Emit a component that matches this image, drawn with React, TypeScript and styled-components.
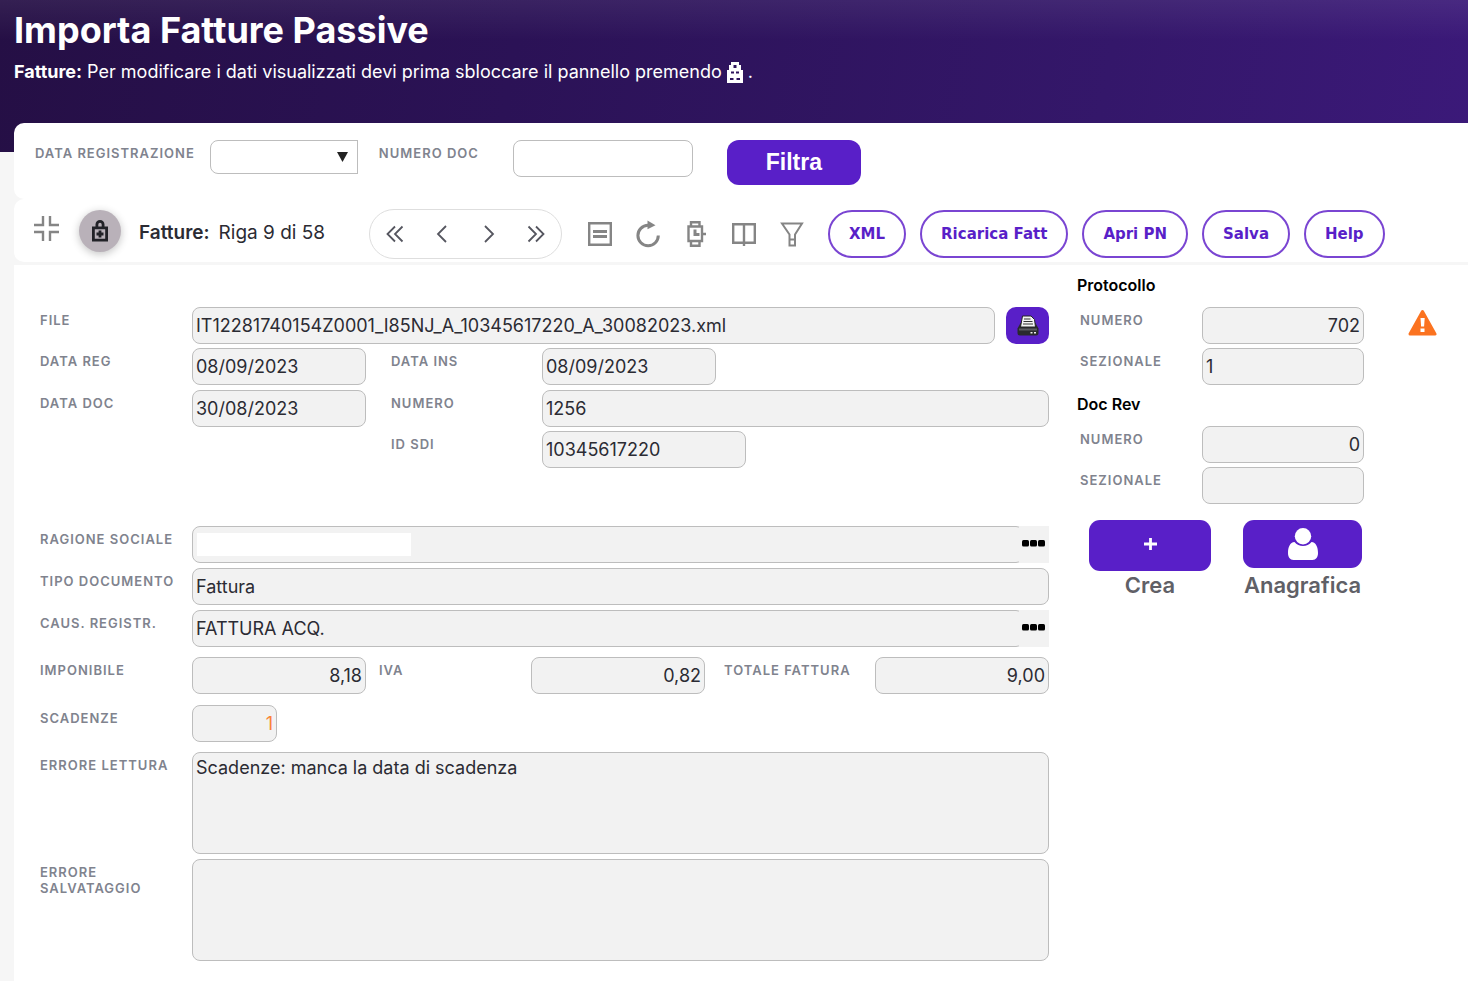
import React, { useId } from 'react';
import styled, { createGlobalStyle } from 'styled-components';

const violet = '#591fc8';

const GlobalStyle = createGlobalStyle`
  *, *::before, *::after { box-sizing: border-box; }
  body {
    margin: 0;
    background: #f6f6f6;
    color: #2b2b33;
    font-family: Inter, "Liberation Sans", sans-serif;
    font-size: 18px;
  }
  button, input, select, textarea { font: inherit; color: inherit; margin: 0; }
  button { cursor: pointer; }
`;

const Page = styled.div`
  display: flex;
  flex-direction: column;
  min-height: 100vh;
`;

const Header = styled.header`
  height: 152px;
  padding: 8px 14px 0;
  color: #fff;
  background:
    linear-gradient(180deg, rgba(255, 255, 255, 0.07), rgba(255, 255, 255, 0) 40px),
    linear-gradient(100deg, #250f45 0%, #2b1256 35%, #34176a 75%, #3b1979 100%);
`;

const Title = styled.h1`
  margin: 0;
  font-size: 36px;
  line-height: 44px;
  font-weight: 700;
`;

const Hint = styled.p`
  display: flex;
  align-items: center;
  gap: 5px;
  margin: 8px 0 0;
  line-height: 24px;
`;

const Main = styled.main`
  flex: 1;
  display: flex;
  flex-direction: column;
  margin: -29px 0 0 14px;
`;

const FilterBar = styled.form`
  display: flex;
  align-items: flex-start;
  height: 76px;
  padding: 17px 20px 0 21px;
  border-radius: 10px 0 0 10px;
  background: #fff;
`;

const Toolbar = styled.section`
  display: flex;
  align-items: center;
  height: 63px;
  padding: 7px 20px 0;
  border-radius: 10px 0 0 10px;
  background: #fff;
`;

const Content = styled.div`
  flex: 1;
  display: grid;
  grid-template-columns: minmax(0, 1fr) 391px;
  column-gap: 28px;
  margin-top: 3px;
  padding: 0 0 20px 26px;
  background: #fff;
`;

const Label = styled.label<{ $width?: number }>`
  flex: none;
  width: ${(p) => (p.$width ? p.$width + 'px' : 'auto')};
  padding-top: 5px;
  font-size: 13px;
  line-height: 16px;
  font-weight: 600;
  letter-spacing: 1px;
  text-transform: uppercase;
  color: #80838e;
`;

const Field = styled.input<{ $width?: number; $alert?: boolean }>`
  flex: ${(p) => (p.$width ? 'none' : '1')};
  width: ${(p) => (p.$width ? p.$width + 'px' : 'auto')};
  min-width: 0;
  height: 37px;
  padding: 0 3px;
  border: 1px solid #bdbdbd;
  border-radius: 8px;
  background: #f2f2f2;
  outline: 0;
  color: ${(p) => (p.$alert ? '#fb8437' : 'inherit')};
  text-align: ${(p) => (p.inputMode === 'decimal' ? 'right' : 'left')};
`;

const FilterField = styled(Field)`
  background: #fff;
`;

const Area = styled.textarea`
  flex: 1;
  height: 102px;
  padding: 3px;
  border: 1px solid #bdbdbd;
  border-radius: 8px;
  background: #f2f2f2;
  line-height: 24px;
  outline: 0;
  resize: none;
`;

const Picker = styled.div`
  position: relative;
  width: 148px;
  margin: 0 21px 0 15px;
`;

const PickerSelect = styled.select`
  display: block;
  width: 100%;
  height: 34px;
  padding: 0 30px 0 4px;
  border: 1px solid #bdbdbd;
  border-radius: 8px;
  background: #fff;
  appearance: none;
  outline: 0;
`;

const PickerArrow = styled.span`
  position: absolute;
  top: 0;
  right: 0;
  bottom: 0;
  display: flex;
  align-items: center;
  justify-content: center;
  width: 29px;
  border: 1px solid #bdbdbd;
  border-left: 0;
  background: #fff;
  pointer-events: none;
`;

const FilterButton = styled.button`
  width: 134px;
  height: 45px;
  margin-left: 34px;
  border: 0;
  border-radius: 12px;
  background: ${violet};
  color: #fff;
  font-family: "Liberation Sans", Arial, sans-serif;
  font-size: 23px;
  font-weight: 700;
`;

const BareButton = styled.button`
  display: flex;
  align-items: center;
  justify-content: center;
  padding: 0;
  border: 0;
  background: none;
`;

const CollapseButton = styled(BareButton)`
  margin-bottom: 12px;
`;

const LockButton = styled(BareButton)`
  width: 42px;
  height: 42px;
  margin: 0 18px 6px 20px;
  border-radius: 50%;
  background: #b9b1b9;
  box-shadow: 0 2px 8px rgba(0, 0, 0, 0.24);
`;

const RowStatus = styled.h2`
  width: 230px;
  margin: 0 0 2px;
  font-size: 19px;
  line-height: 24px;
  font-weight: 400;
  white-space: nowrap;
  b { font-weight: 600; margin-right: 9px; }
`;

const Pager = styled.nav`
  display: flex;
  align-items: center;
  justify-content: space-between;
  width: 193px;
  height: 50px;
  padding: 0 13px;
  border: 1px solid #dedede;
  border-radius: 25px;
`;

const Tools = styled.div`
  display: flex;
  gap: 20px;
  margin: 0 22px 0 24px;
`;

const Actions = styled.div`
  display: flex;
  gap: 14px;
`;

const ActionButton = styled.button`
  height: 48px;
  padding: 0 19px;
  border: 2px solid #7a45d2;
  border-radius: 24px;
  background: #fff;
  color: ${violet};
  font-family: "DejaVu Sans", Verdana, sans-serif;
  font-size: 15px;
  font-weight: 700;
  white-space: nowrap;
`;

const FormColumn = styled.form`
  padding-top: 42px;
`;

const Row = styled.div<{ $gap?: number }>`
  display: flex;
  align-items: flex-start;
  margin-bottom: ${(p) => p.$gap ?? 5}px;
`;

const PairCell = styled.div<{ $width?: number; $push?: number }>`
  display: flex;
  align-items: flex-start;
  flex: ${(p) => (p.$width ? 'none' : '1')};
  width: ${(p) => (p.$width ? p.$width + 'px' : 'auto')};
  margin-left: ${(p) => p.$push ?? 0}px;
`;

const PrintButton = styled(BareButton)`
  width: 43px;
  height: 37px;
  margin-left: 11px;
  border-radius: 10px;
  background: ${violet};
`;

const Lookup = styled.div`
  flex: 1;
  display: flex;
`;

const LookupButton = styled(BareButton)`
  position: relative;
  width: 30px;
  height: 37px;
  margin-left: -5px;
  padding: 0 2px 2px 0;
  background: #f2f2f2;
`;

const Redaction = styled.span`
  position: absolute;
  top: 7px;
  left: 5px;
  width: 214px;
  height: 23px;
  background: #fff;
`;

const FieldWrap = styled.div`
  position: relative;
  display: flex;
  flex: 1;
`;

const Side = styled.aside`
  padding-top: 10px;
`;

const SideTitle = styled.h3`
  margin: 0 0 12px;
  color: #000;
  font-size: 16px;
  line-height: 20px;
  font-weight: 600;
`;

const SideGroup = styled.section`
  margin-bottom: 9px;
`;

const SideRow = styled(Row)`
  padding-left: 3px;
`;

const SideActions = styled.div`
  display: flex;
  gap: 32px;
  margin: 16px 0 0 12px;
`;

const SideAction = styled.div<{ $width: number }>`
  display: flex;
  flex-direction: column;
  align-items: center;
  width: ${(p) => p.$width}px;
`;

const SideButton = styled(BareButton)<{ $height: number }>`
  width: 100%;
  height: ${(p) => p.$height}px;
  border-radius: 11px;
  background: ${violet};
  color: #fff;
`;

const Caption = styled.label<{ $space: number }>`
  margin-top: ${(p) => p.$space}px;
  color: #606066;
  font-size: 22px;
  line-height: 28px;
  font-weight: 600;
`;

const WarningIcon = styled.svg`
  margin: 2px 0 0 44px;
`;

const Svg = ({ children }: { children: React.ReactNode }) => (
  <svg width="28" height="28" viewBox="0 0 28 28" fill="none" stroke="#858585" strokeWidth="2.4" aria-hidden="true">
    {children}
  </svg>
);

const Chevron = ({ d }: { d: string }) => (
  <svg width="24" height="24" viewBox="0 0 24 24" fill="none" stroke="#55565f" strokeWidth="1.8" aria-hidden="true">
    <path d={d} />
  </svg>
);

const Dots = () => (
  <svg width="23" height="7" viewBox="0 0 23 7" aria-hidden="true">
    <rect x="0" width="7" height="6.500" rx="1.500" />
    <rect x="8" width="7" height="6.500" rx="1.500" />
    <rect x="16" width="7" height="6.500" rx="1.500" />
  </svg>
);

type EntryProps = {
  label: string;
  value?: string;
  labelWidth: number;
  width?: number;
  numeric?: boolean;
  alert?: boolean;
};

const Entry = ({ label, value = '', labelWidth, width, numeric, alert }: EntryProps) => {
  const id = useId();
  return (
    <>
      <Label htmlFor={id} $width={labelWidth}>{label}</Label>
      <Field id={id} readOnly value={value} $width={width} $alert={alert} inputMode={numeric ? 'decimal' : 'text'} />
    </>
  );
};

const LookupEntry = ({ label, value = '', masked }: { label: string; value?: string; masked?: boolean }) => {
  const id = useId();
  return (
    <>
      <Label htmlFor={id} $width={152}>{label}</Label>
      <Lookup>
        <FieldWrap>
          <Field id={id} readOnly value={value} />
          {masked && <Redaction />}
        </FieldWrap>
        <LookupButton type="button" aria-label={'Cerca ' + label}><Dots /></LookupButton>
      </Lookup>
    </>
  );
};

const AreaEntry = ({ label, value = '' }: { label: string; value?: string }) => {
  const id = useId();
  return (
    <>
      <Label htmlFor={id} $width={152}>{label}</Label>
      <Area id={id} readOnly value={value} />
    </>
  );
};

export default function App() {
  return (
    <Page>
      <GlobalStyle />
      <Header>
        <Title>Importa Fatture Passive</Title>
        <Hint>
          <b>Fatture:</b>
          <span>Per modificare i dati visualizzati devi prima sbloccare il pannello premendo</span>
          <svg width="16" height="21" viewBox="0 0 16 21" fill="#fff" fillRule="evenodd" aria-hidden="true">
            <path d="M4 0h8v3h2v5h2v13H0V8h2V3h2zM6.500 3v3h3V3zM4 9.500v2h3v-2zm5 0v2h3v-2zM3 16v2h3.500v-2zm6.500 0v2H13v-2z" />
          </svg>
          <span>.</span>
        </Hint>
      </Header>

      <Main>
        <FilterBar>
          <Label htmlFor="data-registrazione">Data registrazione</Label>
          <Picker>
            <PickerSelect id="data-registrazione"><option /></PickerSelect>
            <PickerArrow>
              <svg width="11" height="10" viewBox="0 0 11 10" aria-hidden="true"><path d="M0 0h11L5.500 10z" fill="#222" /></svg>
            </PickerArrow>
          </Picker>
          <Label htmlFor="numero-doc" $width={134}>Numero doc</Label>
          <FilterField id="numero-doc" $width={180} />
          <FilterButton type="button">Filtra</FilterButton>
        </FilterBar>

        <Toolbar>
          <CollapseButton aria-label="Riduci">
            <svg width="25" height="25" viewBox="0 0 25 25" fill="none" stroke="#858585" strokeWidth="2.400" aria-hidden="true">
              <path d="M9 0v9H0M16 0v9h9M9 25v-9H0M16 25v-9h9" />
            </svg>
          </CollapseButton>
          <LockButton aria-label="Sblocca">
            <svg width="16" height="22" viewBox="0 0 16 22" fill="none" stroke="#222228" strokeWidth="2.800" aria-hidden="true">
              <path d="M1.400 7.900h13.200v12.200H1.400zM4.900 8V4.500a3.100 3.100 0 0 1 6.200 0V8M8 10.500v7M4.500 14h7" />
            </svg>
          </LockButton>
          <RowStatus><b>Fatture:</b>Riga 9 di 58</RowStatus>
          <Pager aria-label="Righe">
            <BareButton aria-label="Prima"><Chevron d="M12 4.500L4.500 12l7.500 7.500M19.500 4.500L12 12l7.500 7.500" /></BareButton>
            <BareButton aria-label="Precedente"><Chevron d="M16 4L8 12l8 8" /></BareButton>
            <BareButton aria-label="Successiva"><Chevron d="M8 4l8 8-8 8" /></BareButton>
            <BareButton aria-label="Ultima"><Chevron d="M4.500 4.500L12 12l-7.500 7.500M12 4.500l7.500 7.500-7.500 7.500" /></BareButton>
          </Pager>
          <Tools>
            <BareButton aria-label="Elenco">
              <Svg><path d="M3.200 3.200h21.600v21.600H3.200z" /><path d="M7 11.500h14M7 16.500h14" strokeWidth="2.800" /></Svg>
            </BareButton>
            <BareButton aria-label="Aggiorna">
              <Svg><path d="M24.300 15.500A10.200 10.200 0 1 1 14 5.300h3" strokeWidth="3" /><path d="M13.500 0.500l8 4.800-8 4z" fill="#858585" stroke="none" /></Svg>
            </BareButton>
            <BareButton aria-label="Cronologia">
              <Svg><path d="M6.500 6.500h13.500v14.500H6.500zM9 6.500V2.200h8.500v4.300M9 21v4.800h8.500V21M20 14h4" /><path d="M13 9.500v5h4.500" strokeWidth="3" /></Svg>
            </BareButton>
            <BareButton aria-label="Libro">
              <Svg><path d="M3.200 4.200h21.600v18.600H3.200zM14 4v22" /></Svg>
            </BareButton>
            <BareButton aria-label="Filtro">
              <Svg><path d="M4 3.500h20l-7 11v11h-5.500v-11zM11.500 19.500H17" strokeWidth="2" /></Svg>
            </BareButton>
          </Tools>
          <Actions>
            <ActionButton>XML</ActionButton>
            <ActionButton>Ricarica Fatt</ActionButton>
            <ActionButton>Apri PN</ActionButton>
            <ActionButton>Salva</ActionButton>
            <ActionButton>Help</ActionButton>
          </Actions>
        </Toolbar>

        <Content>
          <FormColumn>
            <Row $gap={4}>
              <Entry label="File" labelWidth={152} value="IT12281740154Z0001_I85NJ_A_10345617220_A_30082023.xml" />
              <PrintButton type="button" aria-label="Stampa">
                <svg width="22" height="22" viewBox="0 0 22 22" aria-hidden="true">
                  <path d="M3.500 8h15l3 5.500V18a2.500 2.500 0 0 1-2.500 2.500H3A2.500 2.500 0 0 1 .5 18v-4.500z" fill="#2a2a2d" />
                  <path d="M5.500 1H14l3.500 3.500 1 7.500H3.500z" fill="#f4f4f4" stroke="#232326" />
                  <path d="M7 4h6.500M6.500 6.500h9M6 9h10" stroke="#333" />
                  <path d="M2 13.500h18v2H2z" fill="#5b5b60" />
                  <path d="M13.500 17h2v1.500h-2zM17 17h2v1.500h-2z" fill="#eee" />
                </svg>
              </PrintButton>
            </Row>
            <Row>
              <PairCell $width={326}><Entry label="Data reg" labelWidth={152} width={174} value="08/09/2023" /></PairCell>
              <PairCell $push={25}><Entry label="Data ins" labelWidth={151} width={174} value="08/09/2023" /></PairCell>
            </Row>
            <Row $gap={4}>
              <PairCell $width={326}><Entry label="Data doc" labelWidth={152} width={174} value="30/08/2023" /></PairCell>
              <PairCell $push={25}><Entry label="Numero" labelWidth={151} value="1256" /></PairCell>
            </Row>
            <Row $gap={58}>
              <PairCell $push={351}><Entry label="ID SDI" labelWidth={151} width={204} value="10345617220" /></PairCell>
            </Row>
            <Row><LookupEntry label="Ragione sociale" masked /></Row>
            <Row><Entry label="Tipo documento" labelWidth={152} value="Fattura" /></Row>
            <Row $gap={10}><LookupEntry label="Caus. registr." value="FATTURA ACQ." /></Row>
            <Row $gap={11}>
              <PairCell $width={326}><Entry label="Imponibile" labelWidth={152} width={174} value="8,18" numeric /></PairCell>
              <PairCell $push={13}><Entry label="IVA" labelWidth={152} width={174} value="0,82" numeric /></PairCell>
              <PairCell $width={325}><Entry label="Totale fattura" labelWidth={151} width={174} value="9,00" numeric /></PairCell>
            </Row>
            <Row $gap={10}><Entry label="Scadenze" labelWidth={152} width={85} value="1" numeric alert /></Row>
            <Row><AreaEntry label="Errore lettura" value="Scadenze: manca la data di scadenza" /></Row>
            <Row><AreaEntry label="Errore salvataggio" /></Row>
          </FormColumn>

          <Side>
            <SideGroup>
              <SideTitle>Protocollo</SideTitle>
              <SideRow $gap={4}>
                <Entry label="Numero" labelWidth={122} width={162} value="702" numeric />
                <WarningIcon width="29" height="28" viewBox="0 0 29 28" role="img" aria-label="Attenzione">
                  <path d="M14.500 2.500L27 25H2z" fill="#fb7320" stroke="#fb7320" strokeWidth="3" strokeLinejoin="round" />
                  <path d="M12.500 9h4.200l-.6 8.500h-3zM12.500 19.500h4v3.500h-4z" fill="#fff" />
                </WarningIcon>
              </SideRow>
              <SideRow><Entry label="Sezionale" labelWidth={122} width={162} value="1" /></SideRow>
            </SideGroup>
            <SideGroup>
              <SideTitle>Doc Rev</SideTitle>
              <SideRow $gap={4}><Entry label="Numero" labelWidth={122} width={162} value="0" numeric /></SideRow>
              <SideRow><Entry label="Sezionale" labelWidth={122} width={162} /></SideRow>
            </SideGroup>
            <SideActions>
              <SideAction $width={122}>
                <SideButton id="crea" $height={51} aria-label="Crea">
                  <svg width="13" height="18" viewBox="0 0 13 18" stroke="#fff" strokeWidth="2.800" aria-hidden="true">
                    <path d="M6.500 1v12M0 7h13" />
                  </svg>
                </SideButton>
                <Caption htmlFor="crea" $space={0}>Crea</Caption>
              </SideAction>
              <SideAction $width={119}>
                <SideButton id="anagrafica" $height={48} aria-label="Anagrafica">
                  <svg width="30" height="32" viewBox="0 0 30 32" fill="#fff" aria-hidden="true">
                    <circle cx="15" cy="8.200" r="8.200" />
                    <path d="M6.500 14a11 11 0 0 0 17 0C28 14.500 30 19 30 25c0 4-2 7-5.500 7h-19C2 32 0 29 0 25c0-6 2-10.500 6.500-11z" />
                  </svg>
                </SideButton>
                <Caption htmlFor="anagrafica" $space={3}>Anagrafica</Caption>
              </SideAction>
            </SideActions>
          </Side>
        </Content>
      </Main>
    </Page>
  );
}
